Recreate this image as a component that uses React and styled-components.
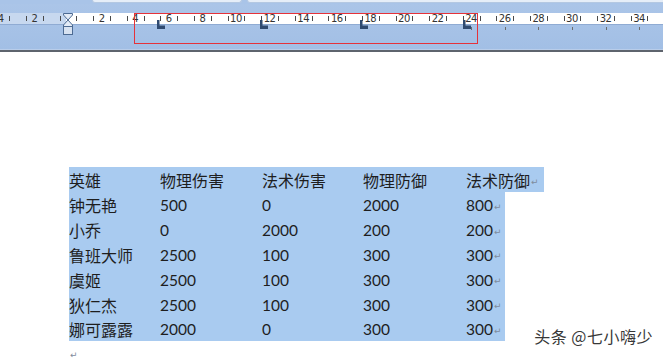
import React from 'react';
import styled, { createGlobalStyle } from 'styled-components';

const UNIT = 16.8;
const ZERO = 68;

const GlobalStyle = createGlobalStyle`
  *, *::before, *::after {
    box-sizing: border-box;
  }
  html, body {
    margin: 0;
    padding: 0;
    background: #fff;
  }
  body {
    font-family: "Liberation Sans", "Noto Sans CJK SC", sans-serif;
  }
`;

const Root = styled.div`
  width: 663px;
  height: 363px;
  overflow: hidden;
  position: relative;
  display: flex;
  flex-direction: column;
  background: #fff;
`;

const TopStrip = styled.div`
  flex: none;
  height: 4px;
  display: flex;
  gap: 5px;
  padding: 0 0 0 92px;
  background: #a9c4e8;
`;

const Tab = styled.div`
  flex: none;
  width: ${props => props.w}px;
  height: 3px;
  background: #e6eef8;
  border: 1px solid #b4c8e2;
  border-top: none;
  border-radius: 0 0 4px 4px;
`;

const RulerBody = styled.div`
  flex: none;
  position: relative;
  height: 46px;
  padding-top: 9px;
  background: linear-gradient(#abc5e8, #a2bfe5);
  border-bottom: 1px solid #b9cde9;
`;

const BottomLine = styled.div`
  flex: none;
  height: 2px;
  background: #5e646d;
`;

const Strip = styled.div`
  height: 12px;
  background: linear-gradient(to right, #c7d8ef 0, #c7d8ef 66px, #fff 66px);
  border-bottom: 1px solid #8fabd3;
  overflow: hidden;
`;

const Scale = styled.div`
  display: flex;
  height: 100%;
  margin-left: ${ZERO - 4.5 * UNIT}px;
`;

const Unit = styled.div`
  flex: none;
  width: ${UNIT}px;
  height: 100%;
  display: flex;
  align-items: center;
`;

const Tick = styled.span`
  flex: none;
  width: 1px;
  height: 5px;
  background: #4a4a4a;
`;

const Num = styled.span`
  flex: 1;
  margin-right: 1px;
  text-align: center;
  font-family: "DejaVu Sans", sans-serif;
  font-size: 10px;
  line-height: 11px;
  color: #333;
  letter-spacing: -0.5px;
`;

const Marks = styled.div`
  display: flex;
  margin-left: ${ZERO + 24 * UNIT}px;
  margin-top: 2px;
`;

const DefaultStop = styled.div`
  flex: none;
  width: ${UNIT * 2}px;
  height: 3px;
  & > span {
    display: block;
    width: 1px;
    height: 3px;
    background: #6b6b6b;
  }
`;

const Hourglass = styled.svg`
  position: absolute;
  left: 63px;
  top: 9px;
`;

const TabStop = styled.svg`
  position: absolute;
  top: 16px;
  left: ${props => props.x}px;
`;

const Frame = styled.div`
  position: absolute;
  left: 134px;
  top: 9px;
  width: 344px;
  height: 31px;
  border: 1px solid #e5323a;
`;

const Page = styled.div`
  flex: 1;
  padding: 115px 0 0 69px;
  display: flex;
  flex-direction: column;
`;

const Row = styled.div`
  display: flex;
  align-items: center;
  width: fit-content;
  height: 24.85px;
  background: #a9cbf0;
  padding-right: ${props => props.$pad}px;
  font-size: 16px;
  color: #1e1e1e;
`;

const Cell = styled.div`
  flex: none;
  width: ${props => (props.w ? `${props.w}px` : 'auto')};
  font-family: ${props => (props.num ? '"Lato", "Liberation Sans"' : '"Noto Sans CJK SC"')}, sans-serif;
  font-size: ${props => (props.num ? '15.5px' : '16px')};
  padding-top: 2px;
  display: flex;
  align-items: center;
`;

const Mark = styled.span`
  font-family: "DejaVu Sans", sans-serif;
  font-size: 9px;
  color: #7f8c9d;
  margin-left: 1px;
  padding-top: 3px;
`;

const EndMark = styled(Mark)`
  margin-left: 1px;
  padding-top: 9px;
`;

const Watermark = styled.div`
  position: absolute;
  right: 10px;
  bottom: 15px;
  font-family: "Noto Sans CJK SC", sans-serif;
  font-size: 16px;
  color: #383838;
  letter-spacing: 0.5px;
  text-shadow: 0 0 2px #fff, 0 0 2px #fff, 1px 1px 1px #fff;
`;

const header = ['英雄', '物理伤害', '法术伤害', '物理防御', '法术防御'];
const rows = [
  ['钟无艳', '500', '0', '2000', '800'],
  ['小乔', '0', '2000', '200', '200'],
  ['鲁班大师', '2500', '100', '300', '300'],
  ['虞姬', '2500', '100', '300', '300'],
  ['狄仁杰', '2500', '100', '300', '300'],
  ['娜可露露', '2000', '0', '300', '300']
];
const widths = [91, 102, 101, 103];

const units = [];
for (let k = -4; k <= 35; k++) units.push(k);

const App = () => (
  <Root>
    <GlobalStyle />
    <TopStrip>
      <Tab w={150} />
      <Tab w={455} />
      <Tab w={50} />
    </TopStrip>
    <RulerBody>
      <Strip>
        <Scale>
          {units.map(k => (
            <Unit key={k}>
              <Tick />
              <Num>{k % 2 === 0 && k !== 0 ? Math.abs(k) : ''}</Num>
            </Unit>
          ))}
        </Scale>
      </Strip>
      <Marks>
        {[0, 1, 2, 3, 4, 5].map(i => (
          <DefaultStop key={i}>
            <span />
          </DefaultStop>
        ))}
      </Marks>
      <Frame />
      <Hourglass width="10" height="22" viewBox="0 0 10 22">
        <path d="M0.5 0.5 H9.5 V2 L5 7 L0.5 2 Z" fill="#e3ebf6" stroke="#4d6b93" />
        <path d="M5 7 L9.5 12 V13.5 H0.5 V12 Z" fill="#e3ebf6" stroke="#4d6b93" />
        <rect x="0.5" y="13.5" width="9" height="8" fill="#d7e2f1" stroke="#4d6b93" />
      </Hourglass>
      {[157, 260, 360, 463].map(x => (
        <TabStop key={x} x={x} width="8" height="9" viewBox="0 0 8 9">
          <path d="M0 0 H2.5 V5.5 H8 V9 H0 Z" fill="#2f4a70" />
        </TabStop>
      ))}
    </RulerBody>
    <BottomLine />
    <Page>
      <Row $pad={5}>
        {header.slice(0, 4).map((h, i) => (
          <Cell key={h} w={widths[i]}>{h}</Cell>
        ))}
        <Cell>
          {header[4]}
          <Mark>↵</Mark>
        </Cell>
      </Row>
      {rows.map(r => (
        <Row key={r[0]} $pad={3}>
          <Cell w={widths[0]}>{r[0]}</Cell>
          <Cell w={widths[1]} num>{r[1]}</Cell>
          <Cell w={widths[2]} num>{r[2]}</Cell>
          <Cell w={widths[3]} num>{r[3]}</Cell>
          <Cell num>
            {r[4]}
            <Mark>↵</Mark>
          </Cell>
        </Row>
      ))}
      <EndMark>↵</EndMark>
    </Page>
    <Watermark>头条 @七小嗨少</Watermark>
  </Root>
);

export default App;
